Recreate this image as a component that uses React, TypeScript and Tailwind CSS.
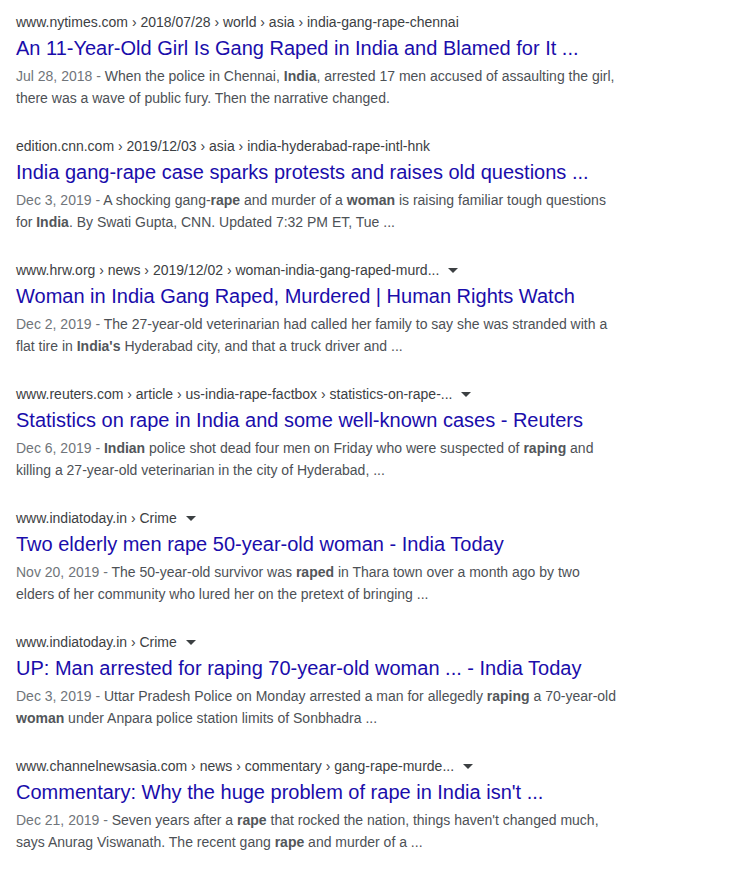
import { Fragment } from "react";

type Part = string | { b: string };

type Result = {
  url: string;
  menu?: boolean;
  title: string;
  date: string;
  snippet: Part[];
};

const results: Result[] = [
  {
    url: "www.nytimes.com › 2018/07/28 › world › asia › india-gang-rape-chennai",
    title: "An 11-Year-Old Girl Is Gang Raped in India and Blamed for It ...",
    date: "Jul 28, 2018",
    snippet: [
      "When the police in Chennai, ",
      { b: "India" },
      ", arrested 17 men accused of assaulting the girl, there was a wave of public fury. Then the narrative changed.",
    ],
  },
  {
    url: "edition.cnn.com › 2019/12/03 › asia › india-hyderabad-rape-intl-hnk",
    title: "India gang-rape case sparks protests and raises old questions ...",
    date: "Dec 3, 2019",
    snippet: [
      "A shocking gang-",
      { b: "rape" },
      " and murder of a ",
      { b: "woman" },
      " is raising familiar tough questions for ",
      { b: "India" },
      ". By Swati Gupta, CNN. Updated 7:32 PM ET, Tue ...",
    ],
  },
  {
    url: "www.hrw.org › news › 2019/12/02 › woman-india-gang-raped-murd...",
    menu: true,
    title: "Woman in India Gang Raped, Murdered | Human Rights Watch",
    date: "Dec 2, 2019",
    snippet: [
      "The 27-year-old veterinarian had called her family to say she was stranded with a flat tire in ",
      { b: "India's" },
      " Hyderabad city, and that a truck driver and ...",
    ],
  },
  {
    url: "www.reuters.com › article › us-india-rape-factbox › statistics-on-rape-...",
    menu: true,
    title: "Statistics on rape in India and some well-known cases - Reuters",
    date: "Dec 6, 2019",
    snippet: [
      { b: "Indian" },
      " police shot dead four men on Friday who were suspected of ",
      { b: "raping" },
      " and killing a 27-year-old veterinarian in the city of Hyderabad, ...",
    ],
  },
  {
    url: "www.indiatoday.in › Crime",
    menu: true,
    title: "Two elderly men rape 50-year-old woman - India Today",
    date: "Nov 20, 2019",
    snippet: [
      "The 50-year-old survivor was ",
      { b: "raped" },
      " in Thara town over a month ago by two elders of her community who lured her on the pretext of bringing ...",
    ],
  },
  {
    url: "www.indiatoday.in › Crime",
    menu: true,
    title: "UP: Man arrested for raping 70-year-old woman ... - India Today",
    date: "Dec 3, 2019",
    snippet: [
      "Uttar Pradesh Police on Monday arrested a man for allegedly ",
      { b: "raping" },
      " a 70-year-old ",
      { b: "woman" },
      " under Anpara police station limits of Sonbhadra ...",
    ],
  },
  {
    url: "www.channelnewsasia.com › news › commentary › gang-rape-murde...",
    menu: true,
    title: "Commentary: Why the huge problem of rape in India isn't ...",
    date: "Dec 21, 2019",
    snippet: [
      "Seven years after a ",
      { b: "rape" },
      " that rocked the nation, things haven't changed much, says Anurag Viswanath. The recent gang ",
      { b: "rape" },
      " and murder of a ...",
    ],
  },
];

function MenuArrow() {
  return (
    <svg width="10" height="5" viewBox="0 0 10 5" className="ml-[9px] shrink-0">
      <path d="M0 0h10L5 5z" fill="#3c4043" />
    </svg>
  );
}

function SearchResult({ r }: { r: Result }) {
  return (
    <div className="mb-[27px]">
      <div className="flex items-center h-[20px] text-[14px] leading-[20px] text-[#3c4043]">
        <span>{r.url}</span>
        {r.menu && <MenuArrow />}
      </div>
      <h3 className="mt-[3px] text-[20px] leading-[26px] text-[#1a0dab] font-normal">
        <a href="#" className="hover:underline">
          {r.title}
        </a>
      </h3>
      <div className="mt-[4px] text-[14px] leading-[22px] text-[#4d5156]">
        <span className="text-[#70757a]">{r.date} - </span>
        {r.snippet.map((p, i) =>
          typeof p === "string" ? (
            <Fragment key={i}>{p}</Fragment>
          ) : (
            <b key={i} className="font-bold text-[#52565a]">
              {p.b}
            </b>
          )
        )}
      </div>
    </div>
  );
}

export default function App() {
  return (
    <div
      className="min-h-screen bg-white pt-[12px] pl-[16px]"
      style={{ fontFamily: '"Liberation Sans", Arial, sans-serif' }}
    >
      <div className="w-[600px]">
        {results.map((r) => (
          <SearchResult key={r.title} r={r} />
        ))}
      </div>
    </div>
  );
}
